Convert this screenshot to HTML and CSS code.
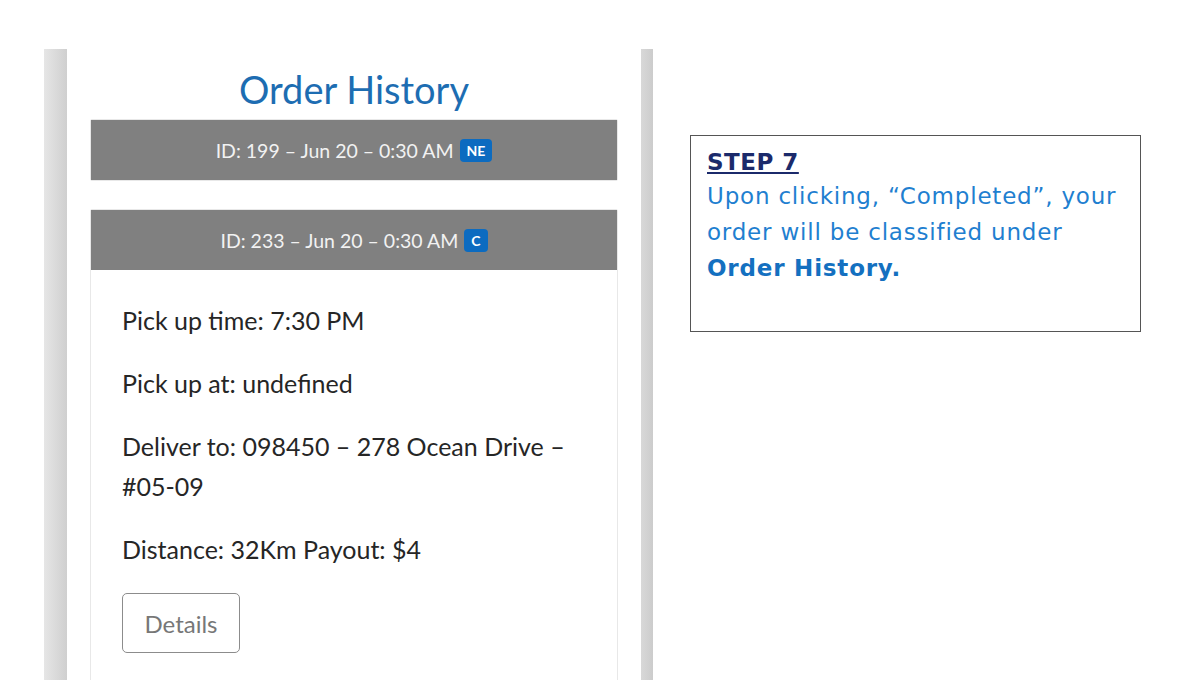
FILE: index.html
```html
<!DOCTYPE html>
<html>
<head>
<meta charset="utf-8">
<link rel="stylesheet" href="styles.css">
</head>
<body>
<div class="page">
  <div class="phone">
    <div class="bar bar-left"></div>
    <div class="screen">
      <h1 class="title">Order History</h1>
      <div class="card collapsed">
        <div class="card-head">ID: 199 – Jun 20 – 0:30 AM <span class="badge">NE</span></div>
      </div>
      <div class="card open">
        <div class="card-head">ID: 233 – Jun 20 – 0:30 AM <span class="badge">C</span></div>
        <div class="card-body">
          <div class="item">Pick up time: 7:30 PM</div>
          <div class="item">Pick up at: undefined</div>
          <div class="item">Deliver to: 098450 – 278 Ocean Drive – #05-09</div>
          <div class="item">Distance: 32Km Payout: $4</div>
          <button class="btn">Details</button>
        </div>
      </div>
    </div>
    <div class="bar bar-right"></div>
  </div>
  <div class="note">
    <div class="step">STEP 7</div>
    <div class="note-text">Upon clicking, “Completed”, your<br>order will be classified under<br><b>Order History.</b></div>
  </div>
</div>
</body>
</html>
```

FILE: styles.css
```css
html, body {
  margin: 0;
  padding: 0;
  background: #ffffff;
  height: 680px;
  overflow: hidden;
}
.page {
  display: flex;
  align-items: flex-start;
  padding-left: 44px;
  padding-top: 49px;
}
.phone {
  display: flex;
  height: 640px;
}
.bar {
  background: linear-gradient(to right, #e6e6e6, #cfcfcf);
}
.bar-left { width: 23px; }
.bar-right { width: 12px; background: linear-gradient(to right, #d8d8d8, #cccccc); }
.screen {
  width: 574px;
  padding: 0 23px;
  box-sizing: border-box;
  font-family: Lato, "Open Sans", sans-serif;
}
.title {
  margin: 0;
  padding-top: 17px;
  height: 70px;
  box-sizing: border-box;
  text-align: center;
  font-weight: 400;
  font-size: 38px;
  line-height: 46px;
  color: #1d6db2;
}
.card {
  border: 1px solid #e8e8e8;
  border-radius: 2px;
}
.card.collapsed {
  margin-bottom: 28px;
}
.card-head {
  background: #808080;
  height: 60px;
  display: flex;
  align-items: center;
  justify-content: center;
  gap: 6px;
  color: #f2f2f2;
  font-size: 19.5px;
}
.badge {
  background: #0c6bc0;
  color: #fff;
  font-size: 14px;
  font-weight: 700;
  border-radius: 4px;
  padding: 3px 7px;
  line-height: 17px;
}
.card-body {
  padding: 18px 30px 40px 31px;
  color: #262626;
  font-size: 25px;
}
.item {
  line-height: 40px;
  padding: 11.5px 0;
}
.btn {
  margin-top: 13px;
  width: 118px;
  height: 60px;
  background: #fff;
  border: 1px solid #8c8c8c;
  border-radius: 5px;
  color: #777;
  font-family: Lato, "Open Sans", sans-serif;
  font-size: 24px;
}
.note {
  margin-left: 37px;
  margin-top: 86px;
  width: 451px;
  height: 197px;
  box-sizing: border-box;
  border: 1.5px solid #555;
  padding: 10px 16px;
  font-family: "DejaVu Sans", sans-serif;
  font-size: 23px;
  letter-spacing: 0.8px;
  line-height: 36px;
  color: #1f7fd0;
  white-space: nowrap;
}
.step {
  color: #1b2a6b;
  font-weight: 700;
  text-decoration: underline;
  line-height: 32px;
  letter-spacing: 0.5px;
}
.note-text b {
  color: #1470c0;
}
```
